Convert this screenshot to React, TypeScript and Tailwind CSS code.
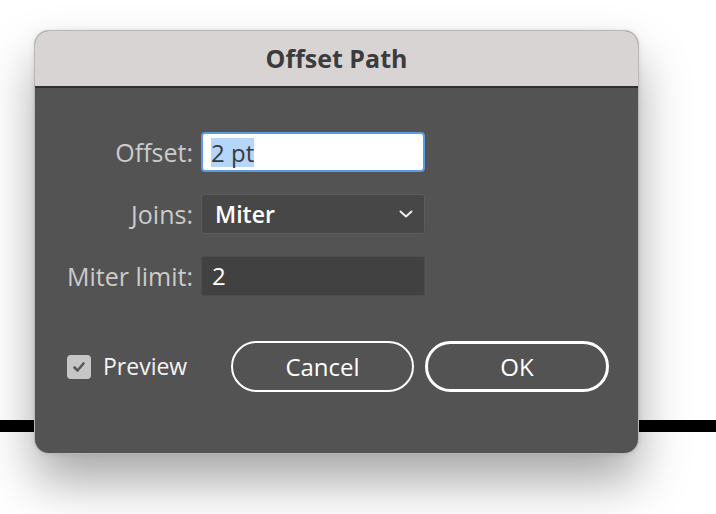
const font = { fontFamily: '"Open Sans", "Liberation Sans", sans-serif' };

function CheckIcon() {
  return (
    <svg width="14" height="14" viewBox="0 0 14 14" fill="none" aria-hidden>
      <path d="M2.5 7.5 5.5 10.5 11.5 3.5" stroke="#5a5a5a" strokeWidth="2.6" strokeLinecap="round" strokeLinejoin="round" />
    </svg>
  );
}

function Chevron() {
  return (
    <svg width="14" height="8" viewBox="0 0 14 8" fill="none" aria-hidden>
      <path d="M1.5 1.5 7 6.5 12.5 1.5" stroke="#ececec" strokeWidth="2" strokeLinecap="round" strokeLinejoin="round" />
    </svg>
  );
}

function FieldRow({ label, children }: { label: string; children: React.ReactNode }) {
  return (
    <div className="flex items-center">
      <div className="w-[158px] text-right text-[25px] font-medium leading-none text-[#cbcbcb]">{label}</div>
      <div className="ml-[8px] w-[224px]">{children}</div>
    </div>
  );
}

export default function App() {
  return (
    <div className="relative h-[514px] w-[716px] overflow-hidden bg-white" style={font}>
      <div className="absolute left-0 right-0 top-[420px] h-[12px] bg-black" />

      <div className="relative z-10 ml-[35px] mt-[31px] w-[603px] overflow-hidden rounded-[14px] bg-[#535353] shadow-[0_28px_50px_rgba(0,0,0,0.35),0_0_6px_rgba(0,0,0,0.12)] ring-1 ring-[#b9b6b6]">
        <div className="flex h-[57px] items-center justify-center border-b-2 border-[#2f2f2f] bg-[#d9d4d4] pt-[1px]">
          <span className="text-[25px] font-bold text-[#3c3c3c]">Offset Path</span>
        </div>

        <div className="flex flex-col gap-[22px] pt-[44px]">
          <FieldRow label="Offset:">
            <div className="flex h-[40px] items-center rounded-[4px] border-2 border-[#5d9be0] bg-white pl-[8px]">
              <span className="bg-[#b4d6fb] text-[24px] leading-[29px] text-[#3a3a3a]">2 pt</span>
            </div>
          </FieldRow>
          <FieldRow label="Joins:">
            <div className="flex h-[40px] items-center justify-between rounded-[3px] border border-[#5c5c5c] bg-[#474747] pl-[13px] pr-[11px]">
              <span className="text-[23px] font-semibold text-white">Miter</span>
              <Chevron />
            </div>
          </FieldRow>
          <FieldRow label="Miter limit:">
            <div className="flex h-[40px] items-center rounded-[3px] border border-[#4c4c4c] bg-[#414141] pl-[10px]">
              <span className="text-[24px] font-medium text-white">2</span>
            </div>
          </FieldRow>
        </div>

        <div className="flex items-center pb-[61px] pl-[32px] pr-[29px] pt-[45px]">
          <div className="flex items-center gap-[12px]">
            <div className="flex h-[24px] w-[24px] items-center justify-center rounded-[4px] bg-[#c6c6c6]">
              <CheckIcon />
            </div>
            <span className="text-[23px] font-medium text-[#f4f4f4]">Preview</span>
          </div>
          <div className="ml-auto flex gap-[11px]">
            <button type="button" className="flex h-[51px] w-[183px] items-center justify-center rounded-full border-2 border-white text-[24px] font-medium text-white">
              Cancel
            </button>
            <button type="button" className="flex h-[51px] w-[184px] items-center justify-center rounded-full border-[3px] border-white text-[24px] font-medium text-white">
              OK
            </button>
          </div>
        </div>
      </div>
    </div>
  );
}
